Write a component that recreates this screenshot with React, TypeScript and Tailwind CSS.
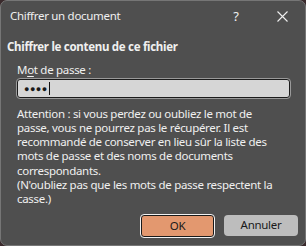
import React from 'react';

export default function App() {
  const font = { fontFamily: '"Segoe UI", "Noto Sans", sans-serif' };
  return (
    <div className="w-[306px] h-[246px] bg-[#3a2a2c]" style={font}>
      <div className="w-full h-full bg-[#4f4f4f] border border-[#767676] rounded-[7px] flex flex-col text-[#f0f0f0] text-[11.5px] tracking-[-0.3px] leading-[14.3px]">
        <div className="flex items-center h-[30px] pl-[9px] shrink-0">
          <span className="flex-1">Chiffrer un document</span>
          <span className="w-[46px] text-center text-[13px]">?</span>
          <span className="w-[46px] flex justify-center">
            <svg width="11" height="11" viewBox="0 0 11 11" stroke="#f0f0f0" strokeWidth="1.1">
              <path d="M0.5 0.5 L10.5 10.5 M10.5 0.5 L0.5 10.5" />
            </svg>
          </span>
        </div>
        <div className="pl-[6px] pt-[9px] font-bold whitespace-nowrap">Chiffrer le contenu de ce fichier</div>
        <div className="pl-[16px] pr-[15px] pt-[9px]">
          <div className="whitespace-nowrap">
            M<span className="underline underline-offset-2">o</span>t de passe :
          </div>
          <div className="mt-[1px] h-[19px] bg-[#d6d6d6] rounded-[3px] border border-[#1c1c1c] outline outline-1 outline-[#9a9a9a] flex items-center pl-[6px]">
            <span className="text-[#1a1a1a] text-[9px] tracking-[0.5px] leading-none">●●●●</span>
            <span className="w-px h-[13px] bg-[#111] ml-px" />
          </div>
          <div className="mt-[9px] whitespace-nowrap">
            Attention : si vous perdez ou oubliez le mot de<br />
            passe, vous ne pourrez pas le récupérer. Il est<br />
            recommandé de conserver en lieu sûr la liste des<br />
            mots de passe et des noms de documents<br />
            correspondants.<br />
            (N'oubliez pas que les mots de passe respectent la<br />
            casse.)
          </div>
        </div>
        <div className="flex justify-end gap-[10px] pr-[7px] mt-auto mb-[8px]">
          <button className="w-[73px] h-[22px] rounded-[3px] bg-[#e3986f] border border-[#1a1a1a] outline outline-1 outline-[#f2f2f2] text-[#1a1a1a]">
            OK
          </button>
          <button className="w-[74px] h-[21px] rounded-[4px] bg-[#bdbdbd] text-[#1a1a1a]">
            Annuler
          </button>
        </div>
      </div>
    </div>
  );
}
